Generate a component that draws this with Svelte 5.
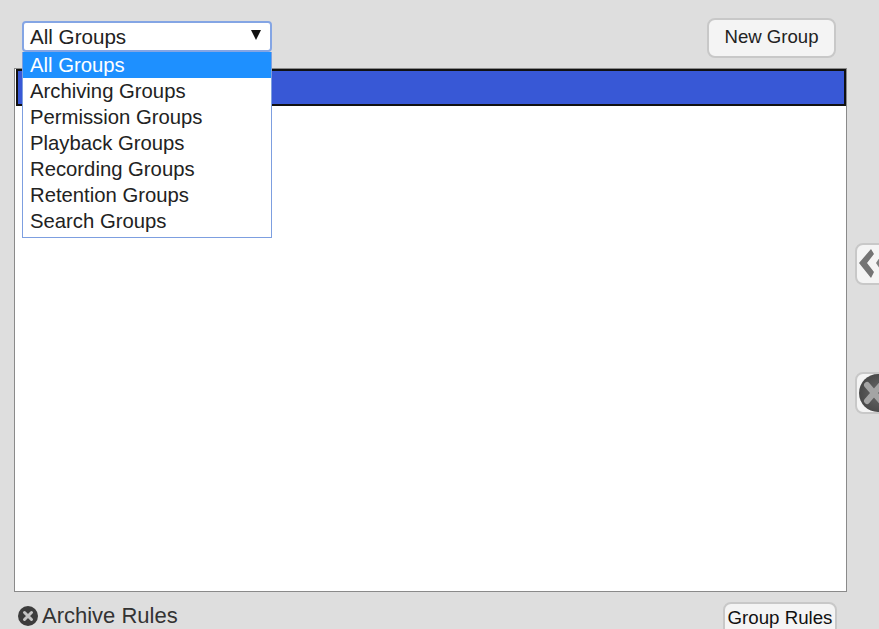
<script>
  const groups = ['All Groups', 'Archiving Groups', 'Permission Groups', 'Playback Groups', 'Recording Groups', 'Retention Groups', 'Search Groups'];
  let selected = 'All Groups';
</script>

<div class="page">
  <div class="toolbar">
    <div class="picker">
      <div class="select">
        <span>{selected}</span>
        <span class="arrow"></span>
      </div>
      <ul class="options">
        {#each groups as group}
          <li class:active={group === selected}>{group}</li>
        {/each}
      </ul>
    </div>
    <button class="new-group">New Group</button>
  </div>

  <div class="main">
    <div class="panel">
      <div class="panel-head"></div>
    </div>
    <div class="side">
      <button class="side-btn">
        <svg width="44" height="40" viewBox="0 0 44 40">
          <path d="M13 4 L1 18 L13 33 L16 27 L9 18 L16 9 Z" fill="#747474" />
          <path d="M22 12 L18 18 L22 24 L26 24 L26 12 Z" fill="#808080" />
        </svg>
      </button>
      <button class="side-btn">
        <svg width="44" height="40" viewBox="0 0 44 40">
          <defs>
            <radialGradient id="knob" cx="0.55" cy="0.5" r="0.55">
              <stop offset="0" stop-color="#6a6a6a" />
              <stop offset="1" stop-color="#484848" />
            </radialGradient>
          </defs>
          <circle cx="20" cy="19" r="19" fill="url(#knob)" />
          <path d="M9 11 L23 27 M23 11 L9 27" stroke="#a4a4a4" stroke-width="6" stroke-linecap="round" />
        </svg>
      </button>
    </div>
  </div>

  <div class="footer">
    <div class="title">
      <svg width="20" height="20" viewBox="0 0 20 20">
        <circle cx="10" cy="10" r="10" fill="#3c3c3c" />
        <path d="M6.5 6.5 L13.5 13.5 M13.5 6.5 L6.5 13.5" stroke="#c4c4c4" stroke-width="3" stroke-linecap="round" />
      </svg>
      <span>Archive Rules</span>
    </div>
    <button class="group-rules">Group Rules</button>
  </div>
</div>

<style>
  :global(body) {
    margin: 0;
    background: #dedede;
  }
  .page {
    width: 879px;
    height: 629px;
    overflow: hidden;
    font-family: "Liberation Sans", Arial, sans-serif;
    color: #222;
    box-sizing: border-box;
    padding: 18px 0 0 14px;
  }
  .toolbar {
    display: flex;
    justify-content: space-between;
    align-items: flex-start;
    height: 50px;
    width: 822px;
  }
  .picker {
    position: relative;
    margin: 3px 0 0 8px;
    width: 250px;
  }
  .select {
    box-sizing: border-box;
    height: 31px;
    display: flex;
    justify-content: space-between;
    align-items: center;
    padding: 0 9px 0 6px;
    background: #fff;
    border: 2px solid #84a5e4;
    border-radius: 4px;
    font-size: 20.6px;
  }
  .arrow {
    width: 0;
    height: 0;
    border-left: 5px solid transparent;
    border-right: 5px solid transparent;
    border-top: 10px solid #111;
    margin-bottom: 3px;
  }
  .options {
    position: absolute;
    top: 31px;
    left: 0;
    right: 0;
    margin: 0;
    padding: 0 0 3px;
    list-style: none;
    background: #fff;
    border: 1.5px solid #7d9fe0;
    border-top: 0;
    font-size: 20.3px;
    z-index: 2;
  }
  .options li {
    height: 26px;
    line-height: 26px;
    padding-left: 7px;
    color: #222;
  }
  .options li.active {
    background: #1e90ff;
    color: #fff;
  }
  button {
    font-family: inherit;
    color: #222;
    background: #f4f4f4;
    border: 2px solid #c8c8c8;
    border-radius: 8px;
    padding: 0;
  }
  .new-group {
    width: 129px;
    height: 40px;
    font-size: 18.6px;
    padding-bottom: 2px;
  }
  .main {
    display: flex;
    align-items: flex-start;
  }
  .panel {
    box-sizing: border-box;
    width: 833px;
    height: 524px;
    flex: none;
    background: #fff;
    border: 1.5px solid #8a8a8a;
    padding: 0 0 0 1px;
  }
  .panel-head {
    box-sizing: border-box;
    height: 37px;
    background: #3858d6;
    border: 2px solid #111;
  }
  .side {
    flex: none;
    display: flex;
    flex-direction: column;
    gap: 87px;
    margin: 175px 0 0 8px;
  }
  .side-btn {
    box-sizing: border-box;
    width: 60px;
    height: 42px;
    display: block;
    padding: 0 0 0 1px;
    line-height: 0;
    text-align: left;
    overflow: hidden;
  }
  .footer {
    display: flex;
    justify-content: space-between;
    align-items: flex-start;
    width: 822px;
    margin-top: 10px;
    padding-left: 4px;
    box-sizing: border-box;
  }
  .title {
    display: flex;
    align-items: center;
    gap: 4px;
    font-size: 22px;
    color: #333;
    height: 27px;
  }
  .group-rules {
    width: 114px;
    height: 40px;
    font-size: 18.7px;
    padding: 0 0 9px;
    color: #111;
    margin-right: -1px;
  }
</style>
